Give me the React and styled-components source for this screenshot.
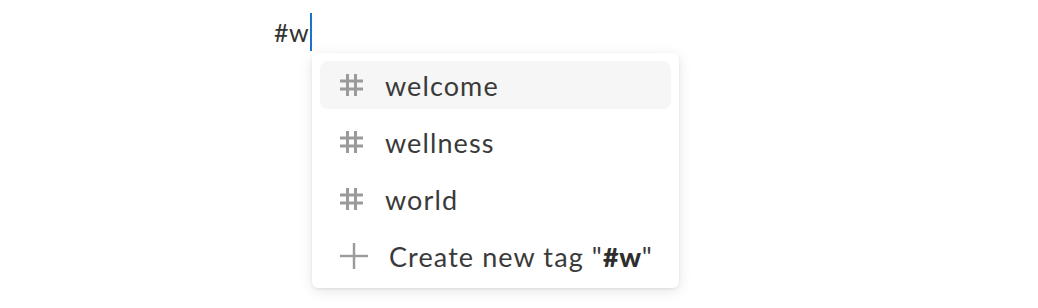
import React from "react";
import styled, { createGlobalStyle } from "styled-components";

const GlobalStyle = createGlobalStyle`
  body {
    margin: 0;
    background: #ffffff;
    font-family: "Lato", "Noto Sans", sans-serif;
  }
`;

const Page = styled.div`
  width: 1038px;
  height: 308px;
  padding: 13px 0 0 274px;
  box-sizing: border-box;
`;

const Editor = styled.div`
  display: flex;
  align-items: center;
  height: 38px;
  font-size: 25px;
  color: #333333;
  letter-spacing: 0.5px;
`;

const Caret = styled.span`
  display: inline-block;
  width: 2px;
  height: 38px;
  margin-left: 1px;
  background: #1b74c9;
`;

const Menu = styled.div`
  margin: 2px 0 0 38px;
  width: 367px;
  padding: 8px;
  box-sizing: border-box;
  display: flex;
  flex-direction: column;
  gap: 9px;
  background: #ffffff;
  border-radius: 6px;
  box-shadow: 0 1px 3px rgba(0, 0, 0, 0.08), 0 3px 14px rgba(0, 0, 0, 0.1);
`;

const Row = styled.div`
  display: flex;
  align-items: center;
  height: 48px;
  padding-left: 20px;
  border-radius: 8px;
  background: ${(p) => (p.$active ? "#f6f6f6" : "transparent")};
  color: #3a3a3a;
  font-size: 27px;
  letter-spacing: 1.1px;
  line-height: 1;
  box-sizing: border-box;
`;

const Icon = styled.svg`
  flex: none;
  margin-right: ${(p) => p.$gap || 21}px;
  margin-top: ${(p) => p.$dy || 0}px;
`;

const Bold = styled.b`
  font-weight: 900;
  color: #2e2e2e;
  letter-spacing: 0.6px;
`;

const HashIcon = () => (
  <Icon width="23" height="22" viewBox="0 0 23 22" $dy={0} $gap={22}>
    <g stroke="#9a9a9a" strokeWidth="3" fill="none">
      <line x1="7.5" y1="0" x2="7.5" y2="22" />
      <line x1="15.5" y1="0" x2="15.5" y2="22" />
      <line x1="0" y1="7" x2="23" y2="7" />
      <line x1="0" y1="15" x2="23" y2="15" />
    </g>
  </Icon>
);

const PlusIcon = () => (
  <Icon width="28" height="26" viewBox="0 0 28 26" $dy={-1} $gap={21}>
    <g stroke="#9a9a9a" strokeWidth="2.4" fill="none">
      <line x1="14" y1="0" x2="14" y2="26" />
      <line x1="0" y1="13" x2="28" y2="13" />
    </g>
  </Icon>
);

const tags = ["welcome", "wellness", "world"];

export default function App() {
  return (
    <Page>
      <GlobalStyle />
      <Editor>
        #w<Caret />
      </Editor>
      <Menu>
        {tags.map((t, i) => (
          <Row key={t} $active={i === 0}>
            <HashIcon />
            {t}
          </Row>
        ))}
        <Row>
          <PlusIcon />
          <span>
            Create new tag "<Bold>#w</Bold>"
          </span>
        </Row>
      </Menu>
    </Page>
  );
}
